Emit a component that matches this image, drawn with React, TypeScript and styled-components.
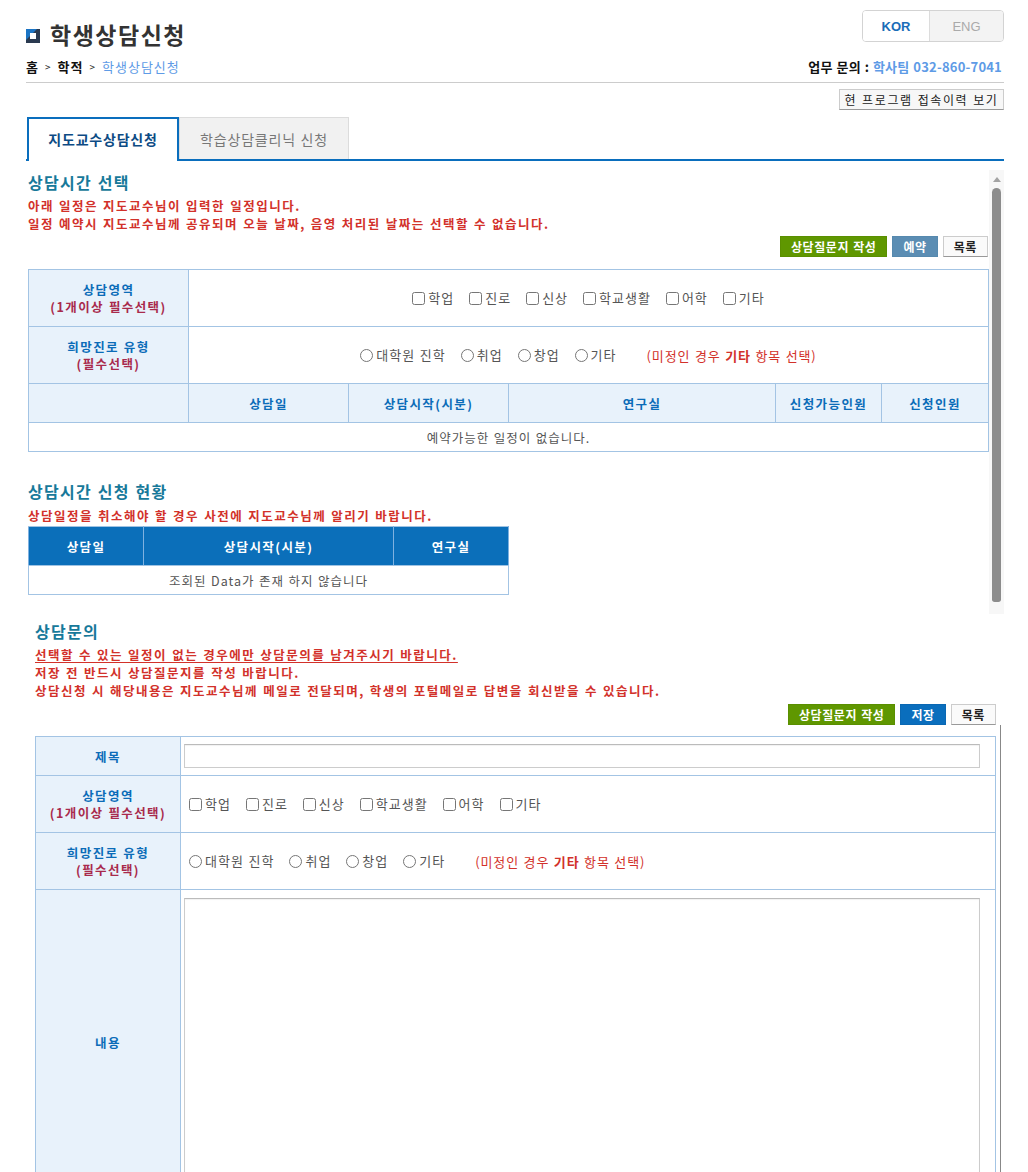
import React from "react";
import styled, { createGlobalStyle } from "styled-components";

const GlobalStyle = createGlobalStyle`
  html, body { margin: 0; padding: 0; background: #fff; overflow: hidden; }
  body {
    font-family: "Noto Sans CJK KR", "Noto Sans", "Liberation Sans", sans-serif;
    color: #333;
    font-size: 12px;
    word-spacing: 0.7px;
  }
  * { box-sizing: border-box; }
`;

const Page = styled.div`
  width: 1028px;
  padding: 10px 24px 0 26px;
`;

const HeaderRow = styled.div`
  display: flex;
  justify-content: space-between;
  align-items: flex-start;
`;

const Title = styled.h1`
  margin: 9px 0 0;
  display: flex;
  align-items: center;
  gap: 10px;
  font-size: 23px;
  font-weight: 700;
  line-height: 30px;
  color: #333;
  letter-spacing: 1.5px;
`;

const TitleIcon = styled.svg`
  width: 14px;
  height: 14px;
  margin-top: 3px;
  flex: none;
`;

const LangToggle = styled.div`
  display: flex;
  height: 32px;
  border: 1px solid #d3d3d3;
  border-radius: 4px;
  overflow: hidden;
`;

const LangItem = styled.div<{ $active?: boolean }>`
  width: ${(p) => (p.$active ? 66 : 74)}px;
  display: flex;
  align-items: center;
  justify-content: center;
  font-size: 13px;
  font-family: "Liberation Sans", "Noto Sans", sans-serif;
  font-weight: ${(p) => (p.$active ? 700 : 400)};
  color: ${(p) => (p.$active ? "#1a6db8" : "#aaa")};
  background: ${(p) => (p.$active ? "#fff" : "#f3f3f3")};
  border-left: ${(p) => (p.$active ? "none" : "1px solid #dcdcdc")};
`;

const CrumbRow = styled.div`
  margin-top: 9px;
  display: flex;
  justify-content: space-between;
  align-items: center;
  line-height: 18px;
  padding-bottom: 6px;
  border-bottom: 1px solid #ccc;
  font-size: 13px;
`;

const Crumbs = styled.div`
  display: flex;
  align-items: center;
  letter-spacing: 1px;
`;

const CrumbItem = styled.span<{ $current?: boolean }>`
  font-weight: ${(p) => (p.$current ? 400 : 700)};
  color: ${(p) => (p.$current ? "#5e9be6" : "#111")};
`;

const CrumbSep = styled.span`
  font-size: 10px;
  margin: 0 7px 0 6px;
  color: #222;
  letter-spacing: 0;
`;

const Contact = styled.div`
  margin-right: 2px;
  color: #111;
  font-weight: 600;
  letter-spacing: 0.2px;
`;

const ContactValue = styled.span`
  color: #5e9be6;
`;

const HistoryRow = styled.div`
  display: flex;
  justify-content: flex-end;
  margin-top: 6px;
`;

const HistoryButton = styled.button`
  width: 165px;
  height: 21px;
  padding: 0;
  font-family: inherit;
  font-size: 12px;
  letter-spacing: 1.6px;
  color: #222;
  background: #f7f7f7;
  border: 1px solid #ccc;
  border-bottom-color: #999;
  word-spacing: inherit;
`;

const TabBar = styled.div`
  margin-top: 7px;
  display: flex;
  align-items: flex-end;
  height: 44px;
  padding-left: 1px;
  border-bottom: 2px solid #0a6ebd;
`;

const Tab = styled.button<{ $active?: boolean }>`
  font-family: inherit;
  word-spacing: inherit;
  width: ${(p) => (p.$active ? 152 : 170)}px;
  height: ${(p) => (p.$active ? 44 : 42)}px;
  margin-bottom: ${(p) => (p.$active ? -2 : 0)}px;
  padding: 0 0 ${(p) => (p.$active ? 2 : 0)}px;
  background: ${(p) => (p.$active ? "#fff" : "#f1f1f1")};
  border: ${(p) => (p.$active ? "2px solid #0a6ebd" : "1px solid #dcdcdc")};
  border-bottom: none;
  font-size: 14px;
  font-weight: ${(p) => (p.$active ? 700 : 400)};
  letter-spacing: 0.8px;
  color: ${(p) => (p.$active ? "#0d4b84" : "#777")};
`;

const Frame = styled.div`
  display: flex;
  margin-top: 9px;
`;

const FrameBody = styled.div`
  flex: 1;
  min-width: 0;
  padding: 2px 1px 19px 2px;
`;

const ScrollTrack = styled.div`
  width: 15px;
  flex: none;
  background: #f7f7f7;
  display: flex;
  flex-direction: column;
  align-items: center;
`;

const ScrollArrow = styled.div`
  margin-top: 7px;
  width: 0;
  height: 0;
  border-left: 4px solid transparent;
  border-right: 4px solid transparent;
  border-bottom: 5px solid #a3a3a3;
`;

const ScrollThumb = styled.div`
  width: 9px;
  flex: 1;
  margin: 6px 0 12px;
  background: #8c8c8c;
  border-radius: 5px 5px 3px 3px;
`;

const SectionTitle = styled.h2<{ $gap?: number; $light?: boolean }>`
  margin: ${(p) => p.$gap ?? 0}px 0 0;
  font-size: 16px;
  font-weight: ${(p) => (p.$light ? 600 : 700)};
  letter-spacing: 1.3px;
  line-height: 20px;
  color: #17799a;
`;

const Notes = styled.div<{ $gap?: number }>`
  margin-top: ${(p) => p.$gap ?? 5}px;
  color: #d2312a;
  font-size: 12.5px;
  letter-spacing: 1.5px;
  font-weight: 700;
  line-height: 18px;
`;

const NoteLine = styled.div<{ $underline?: boolean }>`
  text-decoration: ${(p) => (p.$underline ? "underline" : "none")};
  text-underline-offset: 2px;
`;

const ButtonRow = styled.div<{ $gap?: number }>`
  display: flex;
  justify-content: flex-end;
  gap: 5px;
  margin-top: ${(p) => p.$gap ?? 3}px;
`;

const ActionButton = styled.button<{ $variant: "green" | "steel" | "blue" | "plain" }>`
  height: 21px;
  padding: 0 10px;
  font-family: inherit;
  word-spacing: inherit;
  font-size: 12px;
  letter-spacing: 0.6px;
  font-weight: 700;
  border: 1px solid;
  color: ${(p) => (p.$variant === "plain" ? "#222" : "#fff")};
  background: ${(p) =>
    p.$variant === "green"
      ? "#5f9700"
      : p.$variant === "steel"
      ? "#5b8db3"
      : p.$variant === "blue"
      ? "#0a6ebd"
      : "#fafafa"};
  border-color: ${(p) =>
    p.$variant === "green"
      ? "#5a8f00"
      : p.$variant === "steel"
      ? "#5689ae"
      : p.$variant === "blue"
      ? "#0a68b3"
      : "#ccc #ccc #999"};
`;

const Grid = styled.table<{ $w?: number; $strongTop?: boolean; $gap?: number }>`
  border-collapse: collapse;
  table-layout: fixed;
  margin-top: ${(p) => p.$gap ?? 0}px;
  width: ${(p) => (p.$w ? `${p.$w}px` : "100%")};
  border-top: 1px solid ${(p) => (p.$strongTop ? "#2a72b6" : "#a3c4e4")};
`;

const LabelCell = styled.th<{ $h?: number }>`
  height: ${(p) => (p.$h ? `${p.$h}px` : "auto")};
  background: #e8f2fb;
  border: 1px solid #a3c4e4;
  color: #0b6cb8;
  font-weight: 700;
  font-size: 12.5px;
  letter-spacing: 1.4px;
  line-height: 17px;
  text-align: center;
  vertical-align: middle;
  padding: 0;
`;

const SubLabel = styled.div`
  color: #a82a4c;
`;

const HeadCell = styled.th`
  height: 39px;
  background: #0b6fba;
  border: 1px solid #9fc3e3;
  border-left-color: #7fb1e0;
  border-right-color: #7fb1e0;
  color: #fff;
  font-weight: 700;
  font-size: 12.5px;
  letter-spacing: 1.4px;
  text-align: center;
  padding: 0;
`;

const DataCell = styled.td<{ $h?: number; $pad?: string; $top?: boolean }>`
  height: ${(p) => (p.$h ? `${p.$h}px` : "auto")};
  border: 1px solid #a3c4e4;
  padding: ${(p) => p.$pad ?? "0"};
  color: #555;
  font-size: 12.5px;
  letter-spacing: 1px;
  text-align: center;
  vertical-align: ${(p) => (p.$top ? "top" : "middle")};
`;

const Options = styled.div<{ $center?: boolean }>`
  display: flex;
  align-items: center;
  justify-content: ${(p) => (p.$center ? "center" : "flex-start")};
  gap: 15px;
`;

const Option = styled.label`
  display: inline-flex;
  align-items: center;
  gap: 3px;
  font-size: 13px;
  letter-spacing: 1px;
  color: #555;
  line-height: 16px;
`;

const Box = styled.input`
  margin: 0;
  width: 13px;
  height: 13px;
`;

const RedHint = styled.span`
  margin-left: 15px;
  font-size: 13px;
  letter-spacing: 0.9px;
  color: #d2312a;
`;

const Strong = styled.b`
  font-weight: 700;
`;

const LowerFrame = styled.div`
  padding: 7px 8px 0 9px;
`;

const FormBlock = styled.div`
  margin-right: 3px;
  padding: 11px 4px 0 9px;
  border-right: 1px solid #888;
`;

const TextInput = styled.input`
  display: block;
  width: 100%;
  height: 24px;
  margin: 0;
  border: 1px solid #ccc;
  border-top-color: #bbb;
  box-shadow: inset 0 1px 1px rgba(0, 0, 0, 0.06);
`;

const TextArea = styled.textarea`
  display: block;
  width: 100%;
  height: 288px;
  margin: 0;
  resize: none;
  border: 1px solid #ccc;
  border-top-color: #bbb;
  box-shadow: inset 0 1px 1px rgba(0, 0, 0, 0.06);
`;

const areas = ["학업", "진로", "신상", "학교생활", "어학", "기타"];
const paths = ["대학원 진학", "취업", "창업", "기타"];

function AreaChecks({ center, name }: { center?: boolean; name: string }) {
  return (
    <Options $center={center}>
      {areas.map((a) => (
        <Option key={a}>
          <Box type="checkbox" name={name} />
          {a}
        </Option>
      ))}
    </Options>
  );
}

function PathRadios({ center, name }: { center?: boolean; name: string }) {
  return (
    <Options $center={center}>
      {paths.map((a) => (
        <Option key={a}>
          <Box type="radio" name={name} />
          {a}
        </Option>
      ))}
      <RedHint>
        (미정인 경우 <Strong>기타</Strong> 항목 선택)
      </RedHint>
    </Options>
  );
}

export default function App() {
  return (
    <>
      <GlobalStyle />
      <Page>
        <HeaderRow>
          <Title>
            <TitleIcon viewBox="0 0 14 14">
              <rect x="0" y="0" width="14" height="14" fill="#2a3a50" />
              <polygon points="0,0 11,0 0,11" fill="#1b74c4" />
              <rect x="4" y="4" width="6" height="6" fill="#fff" />
            </TitleIcon>
            학생상담신청
          </Title>
          <LangToggle>
            <LangItem $active>KOR</LangItem>
            <LangItem>ENG</LangItem>
          </LangToggle>
        </HeaderRow>

        <CrumbRow>
          <Crumbs>
            <CrumbItem>홈</CrumbItem>
            <CrumbSep>&gt;</CrumbSep>
            <CrumbItem>학적</CrumbItem>
            <CrumbSep>&gt;</CrumbSep>
            <CrumbItem $current>학생상담신청</CrumbItem>
          </Crumbs>
          <Contact>
            업무 문의 : <ContactValue>학사팀 032-860-7041</ContactValue>
          </Contact>
        </CrumbRow>

        <HistoryRow>
          <HistoryButton>현 프로그램 접속이력 보기</HistoryButton>
        </HistoryRow>

        <TabBar>
          <Tab $active>지도교수상담신청</Tab>
          <Tab>학습상담클리닉 신청</Tab>
        </TabBar>

        <Frame>
          <FrameBody>
            <SectionTitle>상담시간 선택</SectionTitle>
            <Notes>
              <NoteLine>아래 일정은 지도교수님이 입력한 일정입니다.</NoteLine>
              <NoteLine>
                일정 예약시 지도교수님께 공유되며 오늘 날짜, 음영 처리된 날짜는 선택할 수 없습니다.
              </NoteLine>
            </Notes>
            <ButtonRow>
              <ActionButton $variant="green">상담질문지 작성</ActionButton>
              <ActionButton $variant="steel">예약</ActionButton>
              <ActionButton $variant="plain">목록</ActionButton>
            </ButtonRow>

            <Grid $w={960} $strongTop $gap={12}>
              <colgroup>
                <col style={{ width: 160 }} />
                <col style={{ width: 160 }} />
                <col style={{ width: 160 }} />
                <col style={{ width: 267 }} />
                <col style={{ width: 106 }} />
                <col style={{ width: 107 }} />
              </colgroup>
              <tbody>
                <tr>
                  <LabelCell $h={57}>
                    상담영역
                    <SubLabel>(1개이상 필수선택)</SubLabel>
                  </LabelCell>
                  <DataCell colSpan={5}>
                    <AreaChecks center name="area1" />
                  </DataCell>
                </tr>
                <tr>
                  <LabelCell $h={57}>
                    희망진로 유형
                    <SubLabel>(필수선택)</SubLabel>
                  </LabelCell>
                  <DataCell colSpan={5}>
                    <PathRadios center name="path1" />
                  </DataCell>
                </tr>
                <tr>
                  <LabelCell $h={39} />
                  <LabelCell>상담일</LabelCell>
                  <LabelCell>상담시작(시분)</LabelCell>
                  <LabelCell>연구실</LabelCell>
                  <LabelCell>신청가능인원</LabelCell>
                  <LabelCell>신청인원</LabelCell>
                </tr>
                <tr>
                  <DataCell colSpan={6} $h={29}>
                    예약가능한 일정이 없습니다.
                  </DataCell>
                </tr>
              </tbody>
            </Grid>

            <SectionTitle $gap={29}>상담시간 신청 현황</SectionTitle>
            <Notes $gap={6}>
              <NoteLine>상담일정을 취소해야 할 경우 사전에 지도교수님께 알리기 바랍니다.</NoteLine>
            </Notes>
            <Grid $w={480} $gap={1}>
              <colgroup>
                <col style={{ width: 115 }} />
                <col style={{ width: 250 }} />
                <col style={{ width: 115 }} />
              </colgroup>
              <thead>
                <tr>
                  <HeadCell>상담일</HeadCell>
                  <HeadCell>상담시작(시분)</HeadCell>
                  <HeadCell>연구실</HeadCell>
                </tr>
              </thead>
              <tbody>
                <tr>
                  <DataCell colSpan={3} $h={29}>
                    조회된 Data가 존재 하지 않습니다
                  </DataCell>
                </tr>
              </tbody>
            </Grid>
          </FrameBody>
          <ScrollTrack>
            <ScrollArrow />
            <ScrollThumb />
          </ScrollTrack>
        </Frame>

        <LowerFrame>
          <SectionTitle $light>상담문의</SectionTitle>
          <Notes>
            <NoteLine $underline>
              선택할 수 있는 일정이 없는 경우에만 상담문의를 남겨주시기 바랍니다.
            </NoteLine>
            <NoteLine>저장 전 반드시 상담질문지를 작성 바랍니다.</NoteLine>
            <NoteLine>
              상담신청 시 해당내용은 지도교수님께 메일로 전달되며, 학생의 포털메일로 답변을 회신받을 수 있습니다.
            </NoteLine>
          </Notes>
          <ButtonRow $gap={4}>
            <ActionButton $variant="green">상담질문지 작성</ActionButton>
            <ActionButton $variant="blue">저장</ActionButton>
            <ActionButton $variant="plain">목록</ActionButton>
          </ButtonRow>
        </LowerFrame>

        <FormBlock>
          <Grid>
            <colgroup>
              <col style={{ width: 145 }} />
              <col />
            </colgroup>
            <tbody>
              <tr>
                <LabelCell $h={39}>제목</LabelCell>
                <DataCell $pad="0 15px 0 3px">
                  <TextInput type="text" />
                </DataCell>
              </tr>
              <tr>
                <LabelCell $h={57}>
                  상담영역
                  <SubLabel>(1개이상 필수선택)</SubLabel>
                </LabelCell>
                <DataCell $pad="0 0 0 8px">
                  <AreaChecks name="area2" />
                </DataCell>
              </tr>
              <tr>
                <LabelCell $h={57}>
                  희망진로 유형
                  <SubLabel>(필수선택)</SubLabel>
                </LabelCell>
                <DataCell $pad="0 0 0 8px">
                  <PathRadios name="path2" />
                </DataCell>
              </tr>
              <tr>
                <LabelCell>내용</LabelCell>
                <DataCell $pad="8px 15px 8px 3px" $top>
                  <TextArea />
                </DataCell>
              </tr>
            </tbody>
          </Grid>
        </FormBlock>
      </Page>
    </>
  );
}
